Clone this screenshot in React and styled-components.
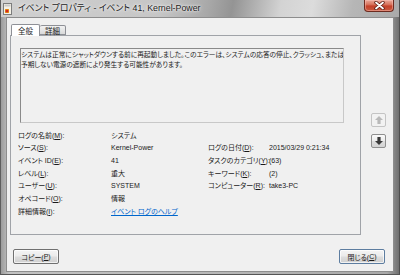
import React from "react";
import styled, { createGlobalStyle } from "styled-components";

const GlobalStyle = createGlobalStyle`
  html, body {
    margin: 0;
    padding: 0;
    background: #ffffff;
    overflow: hidden;
  }
`;

const FONT = `"Liberation Sans", "Noto Sans CJK JP", sans-serif`;

const rows = [
  { label: "ログの名前", key: "M", value: "システム" },
  { label: "ソース", key: "S", value: "Kernel-Power", rLabel: "ログの日付", rKey: "D", rValue: "2015/03/29 0:21:34" },
  { label: "イベント ID", key: "E", value: "41", rLabel: "タスクのカテゴリ", rKey: "Y", rValue: "(63)" },
  { label: "レベル", key: "L", value: "重大", rLabel: "キーワード", rKey: "K", rValue: "(2)" },
  { label: "ユーザー", key: "U", value: "SYSTEM", rLabel: "コンピューター", rKey: "R", rValue: "take3-PC" },
  { label: "オペコード", key: "O", value: "情報" },
  { label: "詳細情報", key: "I", value: "イベント ログのヘルプ", link: true },
];

const Arrow = ({ up, disabled }) => (
  <svg width="8" height="8" viewBox="0 0 8 8">
    <path
      d="M4 0 L8 4 H5.6 V8 H2.4 V4 H0 Z"
      fill={disabled ? "#b9b9b9" : "#3a3a3a"}
      transform={up ? undefined : "rotate(180 4 4)"}
    />
  </svg>
);

const AppIcon = () => (
  <svg width="9" height="12" viewBox="0 0 9 12">
    <rect x="0.5" y="0.5" width="8" height="11" fill="#f4f1e6" stroke="#7d7d7d" />
    <rect x="1.5" y="1.5" width="6" height="2" fill="#c9c9c9" />
    <rect x="2" y="6" width="4" height="4" fill="#e8a21b" />
    <circle cx="4" cy="8" r="1.6" fill="#d3281c" />
  </svg>
);

const CloseGlyph = () => (
  <svg width="11" height="9" viewBox="0 0 11 9">
    <path d="M2 1.5 L9 7.5 M9 1.5 L2 7.5" stroke="#5a1c12" strokeWidth="3.4" strokeLinecap="round" />
    <path d="M2 1.5 L9 7.5 M9 1.5 L2 7.5" stroke="#ffffff" strokeWidth="1.8" strokeLinecap="round" />
  </svg>
);

const App = () => {
  return (
    <>
      <GlobalStyle />
      <Window>
        <TitleBar>
          <IconSlot>
            <AppIcon />
          </IconSlot>
          <Title>イベント プロパティ - イベント 41, Kernel-Power</Title>
          <CloseButton>
            <CloseGlyph />
          </CloseButton>
        </TitleBar>

        <Client>
          <Tabs>
            <Tab $active>全般</Tab>
            <Tab>詳細</Tab>
          </Tabs>

          <Body>
            <Panel>
              <Description>
                システムは正常にシャットダウンする前に再起動しました。このエラーは、システムの応答の停止、クラッシュ、または
                <br />
                予期しない電源の遮断により発生する可能性があります。
              </Description>

              <InfoGrid>
                {rows.map((r) => (
                  <React.Fragment key={r.key}>
                    <Label>
                      {r.label}(<u>{r.key}</u>):
                    </Label>
                    {r.link ? <LinkValue>{r.value}</LinkValue> : <Value>{r.value}</Value>}
                    {r.rLabel ? (
                      <>
                        <Label>
                          {r.rLabel}(<u>{r.rKey}</u>):
                        </Label>
                        <Value>{r.rValue}</Value>
                      </>
                    ) : (
                      <>
                        <span />
                        <span />
                      </>
                    )}
                  </React.Fragment>
                ))}
              </InfoGrid>
            </Panel>

            <SideColumn>
              <NavButton $disabled>
                <Arrow up disabled />
              </NavButton>
              <NavButton>
                <Arrow />
              </NavButton>
            </SideColumn>
          </Body>

          <Footer>
            <PushButton>
              コピー(<u>P</u>)
            </PushButton>
            <PushButton $default>
              閉じる(<u>C</u>)
            </PushButton>
          </Footer>
        </Client>
      </Window>
    </>
  );
};

// Styled Components
const Window = styled.div`
  width: 400px;
  height: 275px;
  box-sizing: border-box;
  display: flex;
  flex-direction: column;
  padding: 0 6px 5px 6px;
  background: linear-gradient(90deg, #9c9c9c 0%, #c2c2c2 2%, #b9b9b9 50%, #a9a9a9 97%, #6f6f6f 100%);
  border-left: 1px solid #5e5e5e;
  border-right: 1px solid #4e4e4e;
  border-bottom: 1px solid #555;
  font-family: ${FONT};
  font-feature-settings: "palt";
  color: #1a1a1a;
  overflow: hidden;
`;

const TitleBar = styled.div`
  height: 17px;
  display: flex;
  align-items: flex-start;
  margin: 0 -6px;
  padding: 0 5px 0 2px;
  background: linear-gradient(100deg, #d0d0d0 0%, #c6c6c6 40%, #a8a8a8 52%, #949494 58%, #d3d3d3 70%, #dcdcdc 78%, #b6b6b6 88%, #aaaaaa 100%);
`;

const IconSlot = styled.div`
  width: 9px;
  height: 12px;
  margin-top: 3px;
  display: flex;
`;

const Title = styled.div`
  flex: 1;
  margin-left: 6px;
  font-size: 8.8px;
  line-height: 17px;
  color: #1c1c1c;
  white-space: nowrap;
  text-shadow: 0 0 4px rgba(255, 255, 255, 0.9), 0 0 2px rgba(255, 255, 255, 0.9);
`;

const CloseButton = styled.div`
  width: 30px;
  height: 12px;
  box-sizing: border-box;
  display: flex;
  align-items: center;
  justify-content: center;
  border: 1px solid #6d2a1f;
  border-top: none;
  border-radius: 0 0 4px 4px;
  background: linear-gradient(180deg, #e9a99a 0%, #d9755f 40%, #c4412a 55%, #c85a3f 100%);
  box-shadow: inset 0 0 0 1px rgba(255, 200, 190, 0.45);
`;

const Client = styled.div`
  flex: 1;
  display: flex;
  flex-direction: column;
  box-sizing: border-box;
  padding: 6px 0 7px 3px;
  background: #f0f0f0;
  border: 1px solid #8d8d8d;
  margin: 0 -1px 0 -1px;
`;

const Tabs = styled.div`
  height: 11px;
  display: flex;
  align-items: flex-end;
  padding-left: 1px;
  position: relative;
  z-index: 1;
`;

const Tab = styled.div`
  box-sizing: border-box;
  height: ${(p) => (p.$active ? "12px" : "10px")};
  margin-bottom: ${(p) => (p.$active ? "-1px" : "0")};
  padding: 0 ${(p) => (p.$active ? "6px" : "5px")};
  display: flex;
  align-items: center;
  font-size: 7.5px;
  border: 1px solid #8e9096;
  border-bottom: ${(p) => (p.$active ? "none" : "1px solid #8e9096")};
  border-left: ${(p) => (p.$active ? "1px solid #8e9096" : "none")};
  border-radius: 2px 2px 0 0;
  background: ${(p) => (p.$active ? "#ffffff" : "linear-gradient(180deg, #f2f2f2 0%, #e6e6e6 50%, #d9d9d9 100%)")};
`;

const Body = styled.div`
  display: flex;
  height: 200px;
`;

const Panel = styled.div`
  flex: 1;
  min-width: 0;
  box-sizing: border-box;
  border: 1px solid #a0a3a8;
  padding: 12px 16px 0 9px;
  display: flex;
  flex-direction: column;
`;

const Description = styled.div`
  height: 75px;
  box-sizing: border-box;
  border: 1px solid #8a8a8a;
  border-right-color: #c8c8c8;
  border-bottom-color: #c8c8c8;
  padding: 1px 0 0 0;
  font-size: 6.7px;
  line-height: 10px;
  white-space: nowrap;
  overflow: hidden;
  background: #f0f0f0;
`;

const InfoGrid = styled.div`
  display: grid;
  grid-template-columns: 93px 97px 61px 1fr;
  grid-auto-rows: 12.7px;
  margin: 6.5px 0 0 -2px;
  align-items: center;
`;

const Label = styled.span`
  font-size: 7px;
  white-space: nowrap;
  line-height: 12.7px;
`;

const Value = styled.span`
  font-size: 7px;
  white-space: nowrap;
  line-height: 12.7px;
`;

const LinkValue = styled(Value)`
  color: #0066cc;
  text-decoration: underline;
`;

const SideColumn = styled.div`
  width: 32px;
  flex: none;
  box-sizing: border-box;
  padding: 78px 0 0 10px;
  display: flex;
  flex-direction: column;
  gap: 7px;
`;

const NavButton = styled.div`
  width: 15px;
  height: 14px;
  box-sizing: border-box;
  display: flex;
  align-items: center;
  justify-content: center;
  border: 1px solid ${(p) => (p.$disabled ? "#c4c4c4" : "#8f8f8f")};
  border-radius: 2px;
  background: ${(p) =>
    p.$disabled ? "#f2f2f2" : "linear-gradient(180deg, #fafafa 0%, #ececec 50%, #dedede 51%, #d4d4d4 100%)"};
`;

const Footer = styled.div`
  margin-top: 14px;
  height: 15px;
  display: flex;
  justify-content: space-between;
  padding: 0 8px 0 3px;
`;

const PushButton = styled.div`
  width: 46px;
  height: 15px;
  box-sizing: border-box;
  display: flex;
  align-items: center;
  justify-content: center;
  font-size: 7px;
  border: 1px solid ${(p) => (p.$default ? "#5d7da0" : "#707070")};
  border-radius: 2px;
  background: linear-gradient(180deg, #f4f4f4 0%, #ebebeb 48%, #dddddd 52%, #d0d0d0 100%);
  box-shadow: inset 0 0 0 1px rgba(255, 255, 255, 0.7);
`;

export default App;
